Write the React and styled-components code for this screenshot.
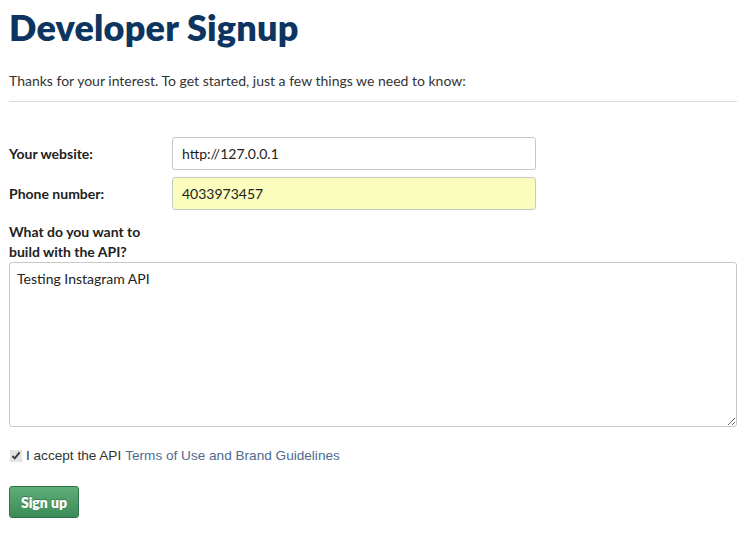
import React from "react";
import styled, { createGlobalStyle } from "styled-components";

const GlobalStyle = createGlobalStyle`
  body {
    margin: 0;
    background: #fff;
    font-family: "Lato", "Open Sans", sans-serif;
    color: #222;
  }
`;

const Page = styled.main`
  padding: 0 14px 0 9px;
`;

const Heading = styled.h1`
  margin: 0;
  padding-top: 6px;
  font-size: 36px;
  line-height: 42px;
  font-weight: 800;
  color: #0d3560;
  letter-spacing: 0.2px;
`;

const Intro = styled.p`
  margin: 23px 0 0;
  font-size: 14px;
  line-height: 20px;
  color: #333;
  padding-bottom: 10px;
  border-bottom: 1px solid #dcdcdc;
`;

const Form = styled.form`
  margin-top: 35px;
  display: flex;
  flex-direction: column;
`;

const Row = styled.div`
  display: grid;
  grid-template-columns: 163px 364px;
  align-items: center;
  margin-bottom: 7px;
`;

const Label = styled.label`
  font-size: 14px;
  font-weight: 700;
  line-height: 20px;
  color: #222;
`;

const Input = styled.input`
  box-sizing: border-box;
  height: 33px;
  padding: 0 9px;
  font: 14px "Lato", sans-serif;
  color: #222;
  background: ${({ $highlight }) => ($highlight ? "#fafdbc" : "#fff")};
  border: 1px solid #c8c8c8;
  border-radius: 3px;
  outline: none;
`;

const AreaLabel = styled(Label)`
  display: block;
  margin-top: 5px;
`;

const TextArea = styled.textarea`
  box-sizing: border-box;
  width: 728px;
  height: 165px;
  padding: 7px 7px;
  font: 14px "Lato", sans-serif;
  color: #222;
  border: 1px solid #c8c8c8;
  border-radius: 3px;
  resize: both;
  outline: none;
`;

const Accept = styled.div`
  display: flex;
  align-items: center;
  margin-top: 21px;
  font-family: "Liberation Sans", Arial, sans-serif;
  font-size: 13.6px;
  color: #333;
`;

const Check = styled.input`
  margin: 0 4px 0 1px;
  width: 12px;
  height: 12px;
  accent-color: #e4e4e4;
`;

const Link = styled.a`
  color: #4f6a8f;
  text-decoration: none;
  margin-left: 4px;
`;

const Button = styled.button`
  align-self: flex-start;
  margin-top: 23px;
  width: 70px;
  height: 32px;
  border: 1px solid #2f7148;
  border-radius: 3px;
  background: linear-gradient(#5fae78, #3c8a57);
  color: #fff;
  font-family: "Lato", sans-serif;
  font-size: 14px;
  font-weight: 800;
  text-shadow: 0 -1px 0 rgba(0, 0, 0, 0.25);
  cursor: pointer;
`;

export default function App() {
  return (
    <>
      <GlobalStyle />
      <Page>
        <Heading>Developer Signup</Heading>
        <Intro>
          Thanks for your interest. To get started, just a few things we need to know:
        </Intro>
        <Form>
          <Row>
            <Label htmlFor="website">Your website:</Label>
            <Input id="website" defaultValue="http://127.0.0.1" />
          </Row>
          <Row>
            <Label htmlFor="phone">Phone number:</Label>
            <Input id="phone" $highlight defaultValue="4033973457" />
          </Row>
          <AreaLabel htmlFor="build">
            What do you want to
            <br />
            build with the API?
          </AreaLabel>
          <TextArea id="build" defaultValue="Testing Instagram API" />
          <Accept>
            <Check type="checkbox" defaultChecked />
            I accept the API
            <Link href="#">Terms of Use and Brand Guidelines</Link>
          </Accept>
          <Button type="button">Sign up</Button>
        </Form>
      </Page>
    </>
  );
}
